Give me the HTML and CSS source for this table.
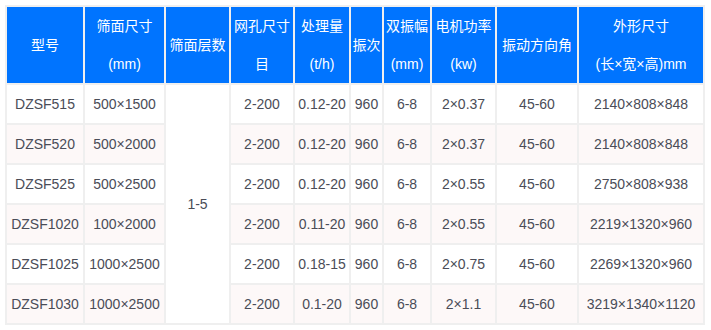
FILE: index.html
```html
<!DOCTYPE html>
<html lang="zh">
<head>
<meta charset="utf-8">
<link rel="stylesheet" href="styles.css">
</head>
<body>
<table class="spec">
  <colgroup>
    <col class="c1"><col class="c2"><col class="c3"><col class="c4"><col class="c5">
    <col class="c6"><col class="c7"><col class="c8"><col class="c9"><col class="c10">
  </colgroup>
  <thead>
    <tr>
      <th>型号</th>
      <th>筛面尺寸<br>(mm)</th>
      <th>筛面层数</th>
      <th>网孔尺寸<br>目</th>
      <th>处理量<br>(t/h)</th>
      <th>振次</th>
      <th>双振幅<br>(mm)</th>
      <th>电机功率<br>(kw)</th>
      <th>振动方向角</th>
      <th>外形尺寸<br>(长×宽×高)mm</th>
    </tr>
  </thead>
  <tbody>
    <tr>
      <td>DZSF515</td><td>500×1500</td><td class="layers" rowspan="6">1-5</td><td>2-200</td><td>0.12-20</td><td>960</td><td>6-8</td><td>2×0.37</td><td>45-60</td><td>2140×808×848</td>
    </tr>
    <tr class="alt">
      <td>DZSF520</td><td>500×2000</td><td>2-200</td><td>0.12-20</td><td>960</td><td>6-8</td><td>2×0.37</td><td>45-60</td><td>2140×808×848</td>
    </tr>
    <tr>
      <td>DZSF525</td><td>500×2500</td><td>2-200</td><td>0.12-20</td><td>960</td><td>6-8</td><td>2×0.55</td><td>45-60</td><td>2750×808×938</td>
    </tr>
    <tr class="alt">
      <td>DZSF1020</td><td>100×2000</td><td>2-200</td><td>0.11-20</td><td>960</td><td>6-8</td><td>2×0.55</td><td>45-60</td><td>2219×1320×960</td>
    </tr>
    <tr>
      <td>DZSF1025</td><td>1000×2500</td><td>2-200</td><td>0.18-15</td><td>960</td><td>6-8</td><td>2×0.75</td><td>45-60</td><td>2269×1320×960</td>
    </tr>
    <tr class="alt">
      <td>DZSF1030</td><td>1000×2500</td><td>2-200</td><td>0.1-20</td><td>960</td><td>6-8</td><td>2×1.1</td><td>45-60</td><td>3219×1340×1120</td>
    </tr>
  </tbody>
</table>
</body>
</html>
```
FILE: styles.css
```css
html, body {
  margin: 0;
  padding: 0;
  background: #ffffff;
}
body {
  padding: 5px 0 0 5px;
  font-family: "Liberation Sans", Arial, "Noto Sans CJK SC", sans-serif;
  font-size: 14px;
  color: #4a4c57;
}
.spec {
  table-layout: fixed;
  width: 700px;
  border-collapse: separate;
  border-spacing: 2px;
  background: #efefef;
}
.c1 { width: 76px; }
.c2 { width: 79px; }
.c3 { width: 63px; }
.c4 { width: 62px; }
.c5 { width: 54px; }
.c6 { width: 31px; }
.c7 { width: 46px; }
.c8 { width: 63px; }
.c9 { width: 80px; }
.c10 { width: 124px; }
.spec th {
  background: #0074ff;
  color: #ffffff;
  font-weight: normal;
  font-size: 14px;
  line-height: 38px;
  height: 76px;
  padding: 0;
  text-align: center;
  vertical-align: middle;
  white-space: nowrap;
  overflow: hidden;
  font-family: "Liberation Sans", Arial, "Noto Sans CJK SC", sans-serif;
}
.spec td {
  background: #ffffff;
  height: 38px;
  padding: 0;
  text-align: center;
  vertical-align: middle;
  white-space: nowrap;
  line-height: 38px;
}
.spec tr.alt td {
  background: #fdf8f8;
}
.spec td.layers {
  background: #ffffff;
}
```
